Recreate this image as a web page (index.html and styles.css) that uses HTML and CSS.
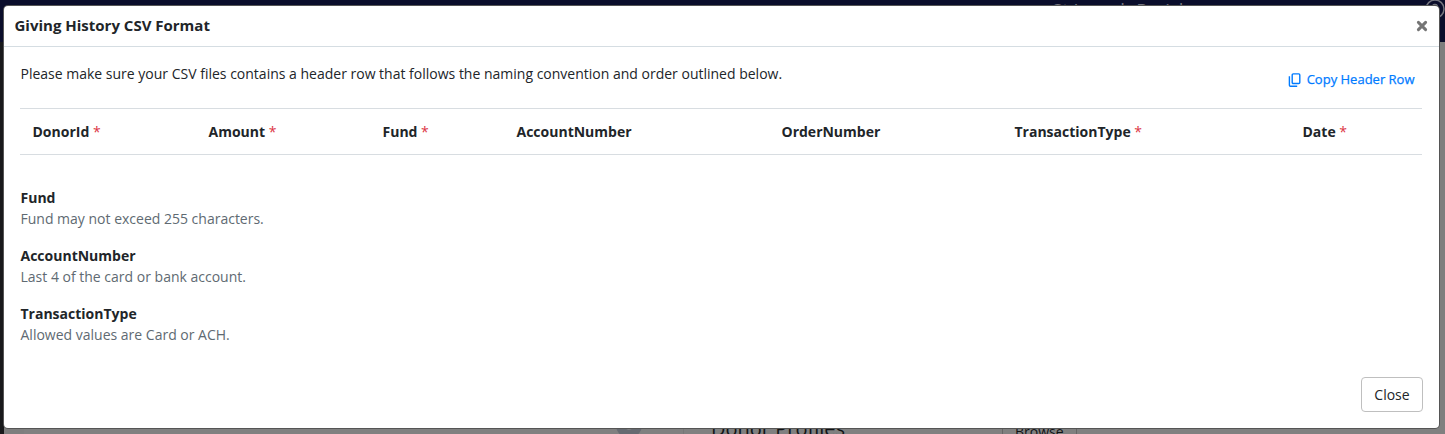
FILE: index.html
```html
<!DOCTYPE html>
<html lang="en">
<head>
  <meta charset="UTF-8" />
  <meta name="viewport" content="width=device-width, initial-scale=1" />
  <title>Giving History CSV Format</title>
  <link rel="stylesheet" href="styles.css">
</head>
<body>
  <div class="page">
    <header class="topbar">
      <span class="org">St Joseph Parish</span>
      <svg class="help" width="20" height="20" viewBox="0 0 20 20" fill="none" stroke="#74757f" stroke-width="1.5">
        <circle cx="10" cy="10" r="9"/>
        <path d="M7.5 8a2.5 2.5 0 1 1 3.5 2.3c-.7.3-1 .7-1 1.7M10 14v1.5"/>
      </svg>
    </header>
    <div class="main">
      <div class="sidebar"></div>
      <div class="content">
        <div class="card">
          <div class="card-icon">
            <svg width="36" height="36" viewBox="0 0 36 36" fill="none" stroke="#666a71" stroke-width="8">
              <circle cx="15" cy="5" r="9"/>
              <path d="M0 28c0-8 7-12 15-12s15 4 15 12"/>
            </svg>
          </div>
          <div class="card-title">Donor Profiles</div>
          <div class="browse">Browse</div>
        </div>
      </div>
    </div>
  </div>

  <div class="modal">
    <div class="modal-header">
      <h5>Giving History CSV Format</h5>
      <button class="close" aria-label="Close">
        <svg width="12" height="12" viewBox="0 0 12 12" stroke="#757575" stroke-width="3" stroke-linecap="round">
          <path d="M2.4 2.4l7.2 7.2M9.6 2.4l-7.2 7.2"/>
        </svg>
      </button>
    </div>
    <div class="modal-body">
      <div class="intro">
        <p>Please make sure your CSV files contains a header row that follows the naming convention and order outlined below.</p>
        <a class="copy">
          <svg width="14" height="14" viewBox="0 0 14 14" fill="none" stroke="#007bff" stroke-width="1.4">
            <rect x="4.2" y=".9" width="7.6" height="9.6" rx="1"/>
            <path d="M1.4 3.2v9.1a1 1 0 0 0 1 1h6.8"/>
          </svg>
          Copy Header Row
        </a>
      </div>
      <table>
        <colgroup>
          <col class="c-donor"><col class="c-amount"><col class="c-fund"><col class="c-account"><col class="c-order"><col class="c-type"><col>
        </colgroup>
        <tr>
          <th>DonorId <span class="req">*</span></th>
          <th>Amount <span class="req">*</span></th>
          <th>Fund <span class="req">*</span></th>
          <th>AccountNumber</th>
          <th>OrderNumber</th>
          <th>TransactionType <span class="req">*</span></th>
          <th>Date <span class="req">*</span></th>
        </tr>
      </table>
      <dl>
        <dt>Fund</dt>
        <dd>Fund may not exceed 255 characters.</dd>
        <dt>AccountNumber</dt>
        <dd>Last 4 of the card or bank account.</dd>
        <dt>TransactionType</dt>
        <dd>Allowed values are Card or ACH.</dd>
      </dl>
    </div>
    <div class="modal-footer">
      <button class="btn">Close</button>
    </div>
  </div>
</body>
</html>
```

FILE: styles.css
```css
* { box-sizing: border-box; }
body { margin: 0; height: 434px; overflow: hidden; font-family: "Open Sans", "Noto Sans", sans-serif; font-size: 14px; line-height: 21px; color: #212529; }
h5, p, dl, dd { margin: 0; }
button { font-family: inherit; cursor: pointer; }

/* page behind the modal */
.page { height: 434px; overflow: hidden; display: flex; flex-direction: column; }
.topbar { height: 42px; flex: none; background: #0a0d2b; display: flex; align-items: flex-start; justify-content: space-between; padding-left: 1052px; }
.org { font-size: 18.5px; line-height: 19px; color: #74757f; }
.help { margin-top: -1px; }
.main { flex: 1; display: flex; }
.sidebar { width: 4px; background: #18191b; }
.content { flex: 1; background: #7e7e7e; padding: 378px 0 0 20px; }
.card { height: 60px; display: flex; background: #808080; }
.card-icon { width: 660px; padding-left: 590px; border-right: 1px solid #777; }
.card-title { width: 318px; padding-left: 27px; font-size: 20px; line-height: 18px; color: #111315; }
.browse { width: 75px; height: 40px; border: 1px solid #666; padding-left: 12px; font-size: 14px; line-height: 21px; color: #111315; }

.modal { position: absolute; top: 6px; left: 4px; width: 1435px; height: 422px; background: #fff; border-radius: 4px; box-shadow: 0 0 0 1px #555; display: flex; flex-direction: column; }
.modal-header { height: 41px; display: flex; align-items: center; justify-content: space-between; padding: 0 11px 2px 10.5px; border-bottom: 1px solid #d5dde2; }
.modal-header h5 { font-size: 15px; font-weight: bold; }
.close { border: none; background: none; padding: 0; width: 12px; height: 12px; margin-top: 2px; }
.close svg { display: block; }
.modal-body { flex: 1; padding: 16px 17px 0 16px; }
.intro { height: 45px; display: flex; justify-content: space-between; padding-left: .5px; }
.copy { display: flex; align-items: center; height: 21px; gap: 5px; margin: 6px 7.5px 0 0; font-size: 13px; font-weight: 500; -webkit-text-stroke: .25px #007bff; color: #007bff; }

table { width: 100%; height: 47px; table-layout: fixed; border-collapse: collapse; }
th { padding: 0 12.5px; text-align: left; border-top: 1px solid #d8dde1; border-bottom: 1px solid #d8dde1; }
.req { font-weight: normal; color: #dc3545; }
.c-donor { width: 176px; }
.c-amount { width: 174px; }
.c-fund { width: 134px; }
.c-account { width: 265px; }
.c-order { width: 233px; }
.c-type { width: 288px; }

dl { padding: 32px 0 0 .5px; }
dt { font-weight: bold; }
dd { color: #606a72; margin-bottom: 16px; }

.modal-footer { display: flex; justify-content: flex-end; padding: 0 16px 16px; }
.btn { width: 62px; height: 35px; font-size: 14px; color: #212529; background: #fff; border: 1px solid #bfbfbf; border-radius: 4px; padding: 0; }
```
